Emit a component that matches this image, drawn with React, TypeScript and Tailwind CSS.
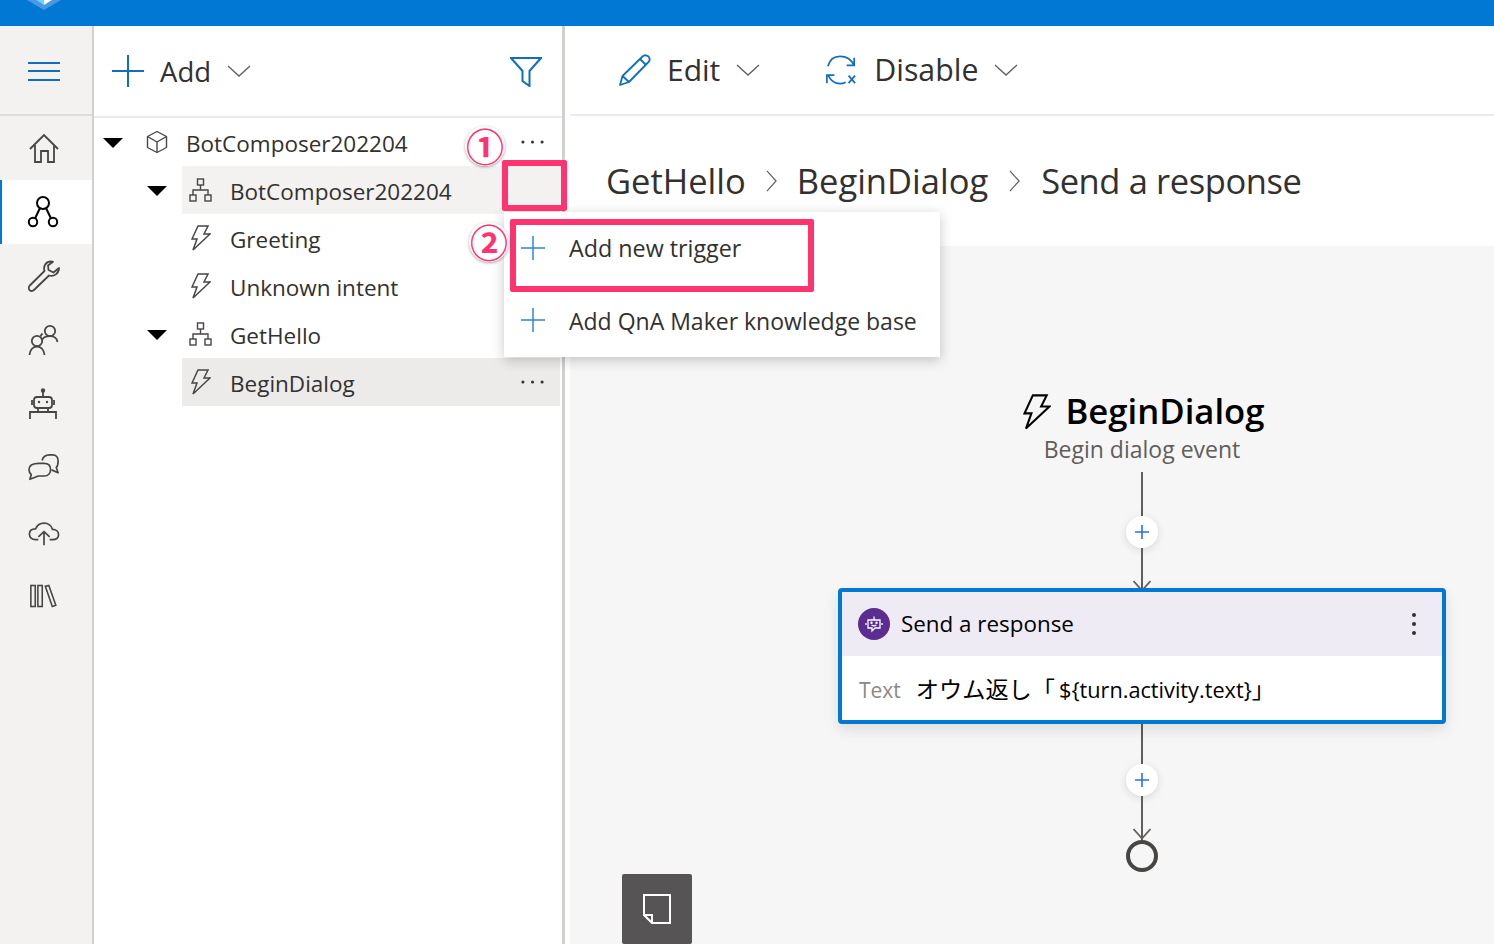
import React from "react";

const F = "font-['Open_Sans','Noto_Sans_CJK_JP',sans-serif]";

type IP = { className?: string };

const Plus = ({ className = "" }: IP) => (
  <svg viewBox="0 0 32 32" className={className} fill="none" stroke="currentColor" strokeWidth="2">
    <path d="M16 0V32M0 16H32" />
  </svg>
);
const Chevron = ({ className = "" }: IP) => (
  <svg viewBox="0 0 24 12" className={className} fill="none" stroke="currentColor" strokeWidth="1.3">
    <path d="M1 1L12 11L23 1" />
  </svg>
);
const Caret = ({ className = "" }: IP) => (
  <svg viewBox="0 0 20 10" className={className} fill="currentColor">
    <path d="M0 0H20L10 10Z" />
  </svg>
);
const Bolt = ({ className = "" }: IP) => (
  <svg viewBox="0 0 20 26" className={className} fill="none" stroke="currentColor" strokeWidth="1.5" strokeLinejoin="miter">
    <path d="M7 1H17L13 9H19L2 25L6 14H1Z" />
  </svg>
);
const Tree = ({ className = "" }: IP) => (
  <svg viewBox="0 0 24 24" className={className} fill="none" stroke="currentColor" strokeWidth="1.4">
    <rect x="8.5" y="1" width="6" height="6" />
    <rect x="1" y="17" width="6" height="6" />
    <rect x="16" y="17" width="6" height="6" />
    <path d="M11.5 7V12M4 17V12H19V17" />
  </svg>
);
const Cube = ({ className = "" }: IP) => (
  <svg viewBox="0 0 22 24" className={className} fill="none" stroke="currentColor" strokeWidth="1.4" strokeLinejoin="round">
    <path d="M11 1.5L20.5 6.5V17.5L11 22.5L1.5 17.5V6.5Z" />
    <path d="M1.5 6.5L11 12L20.5 6.5M11 12V22.5" />
  </svg>
);
const Dots = () => (
  <svg viewBox="0 0 24 4" className="h-1 w-[23px] text-[#323130]" fill="currentColor">
    <circle cx="2" cy="2" r="1.6" />
    <circle cx="12" cy="2" r="1.6" />
    <circle cx="22" cy="2" r="1.6" />
  </svg>
);

const NavHome = () => (
  <svg viewBox="0 0 32 32" className="h-8 w-8" fill="none" stroke="#484644" strokeWidth="1.8">
    <path d="M2 17L16 3L30 17M7 13V30H13V19H20V30H26V13" />
  </svg>
);
const NavFlow = () => (
  <svg viewBox="0 0 32 34" className="h-[34px] w-8" fill="none" stroke="#000" strokeWidth="2">
    <circle cx="16" cy="8" r="6" />
    <circle cx="6" cy="27" r="4.2" />
    <circle cx="26" cy="27" r="4.2" />
    <path d="M13 13L8 23.5M19 13L24 23.5" />
  </svg>
);
const NavWrench = () => (
  <svg viewBox="0 0 32 32" className="h-8 w-8" fill="none" stroke="#484644" strokeWidth="1.8" strokeLinejoin="round">
    <path d="M23 1.5C18 1.5 15 6 16.5 11L1.8 25.5C0 27.5 0.8 29.5 2 30.5C3.5 31.5 5 31 6.5 29.5L21 15.5C26 17 31 13.5 31 8L25.5 12.5L20.5 10L20 5.5L25 1.8C24.5 1.6 23.8 1.5 23 1.5Z" />
  </svg>
);
const NavUsers = () => (
  <svg viewBox="0 0 32 32" className="h-8 w-8" fill="none" stroke="#484644" strokeWidth="1.8">
    <circle cx="22" cy="7" r="5.2" />
    <circle cx="9" cy="17" r="5.2" />
    <path d="M14.5 9.5C13.5 10.5 13 11 12.5 12.5M14 16C15 14 18 12.2 22 12.2C26.5 12.2 29 15 29.5 18M1.5 31C2 26 5 22.5 9 22.5C13 22.5 16 26 16.5 31" />
  </svg>
);
const NavBot = () => (
  <svg viewBox="0 0 28 32" className="h-8 w-7" fill="none" stroke="#484644" strokeWidth="1.8">
    <rect x="5" y="9" width="18" height="11" rx="3" />
    <path d="M14 3V9M3 12V17M25 12V17M9 20V24M19 20V24M1 31V24H27V31" />
    <circle cx="14" cy="2.5" r="1.3" fill="#484644" />
    <circle cx="10" cy="14" r="1.2" fill="#484644" stroke="none" />
    <circle cx="18" cy="14" r="1.2" fill="#484644" stroke="none" />
  </svg>
);
const NavChat = () => (
  <svg viewBox="0 0 34 32" className="h-8 w-8" fill="none" stroke="#484644" strokeWidth="1.8" strokeLinejoin="round">
    <path d="M15 8C16 4 19 2 23 2H26C30 2 32 5 32 8.5C32 12 31.5 14 30 15.5L32 21L25 18" />
    <path d="M12 11H17C22 11 24 14 24 17.5C24 21 22 24.5 17 24.5H11L2 28L3.5 23C2 21.5 1 20 1 17.5C1 14 4 11 12 11Z" />
  </svg>
);
const NavCloud = () => (
  <svg viewBox="0 0 34 26" className="h-[26px] w-8" fill="none" stroke="#484644" strokeWidth="1.8">
    <path d="M11 19H8C4 19 1.5 16.5 1.5 13C1.5 9.5 4 7.5 8 7.5C10 3 13.5 1.5 17 1.5C21.5 1.5 25 4.5 26 8C30 8 32.5 10.5 32.5 13.5C32.5 17 30 19 26 19H23" />
    <path d="M17 25V11M11 16L17 10.5L23 16" />
  </svg>
);
const NavLib = () => (
  <svg viewBox="0 0 32 26" className="h-6 w-7" fill="none" stroke="#484644" strokeWidth="1.8">
    <rect x="1" y="1" width="5" height="24" />
    <rect x="9" y="1" width="5" height="24" />
    <path d="M17.5 2L21.5 1L29.5 23.5L25.5 25Z" />
  </svg>
);

const Row = ({
  indent,
  caret,
  icon,
  label,
  bg,
  dots,
}: {
  indent: string;
  caret?: string;
  icon: React.ReactNode;
  label: string;
  bg?: string;
  dots?: boolean;
}) => (
  <div className="relative flex h-12 items-center">
    {caret && <Caret className={`absolute top-[20px] h-2.5 w-5 text-black ${caret}`} />}
    <div className={`flex h-12 flex-1 items-center ${indent} ${bg ?? ""}`}>
      <div className="flex w-[38px] shrink-0 items-center justify-center">{icon}</div>
      <span className="ml-[10px] pt-[4px] text-[22.5px] leading-none text-[#323130]">{label}</span>
      {dots && (
        <div className="ml-auto mr-[16px]">
          <Dots />
        </div>
      )}
    </div>
  </div>
);

const Stroke = ({ children, className = "" }: { children: React.ReactNode; className?: string }) => (
  <div className={`flex items-center justify-center ${className}`}>{children}</div>
);

const Connector = ({ h }: { h: string }) => <div className={`w-0.5 bg-[#605e5c] ${h}`} />;

const AddDot = () => (
  <div className="flex h-8 w-8 items-center justify-center rounded-full bg-white shadow-[0_2px_8px_rgba(0,0,0,0.12)]">
    <svg viewBox="0 0 16 16" className="h-4 w-4 text-[#2b6fe8]" fill="none" stroke="currentColor" strokeWidth="1.6">
      <path d="M8 1V15M1 8H15" />
    </svg>
  </div>
);

const Arrow = () => (
  <svg viewBox="0 0 20 12" className="h-3 w-5 text-[#605e5c]" fill="none" stroke="currentColor" strokeWidth="1.8">
    <path d="M1.5 1L10 10.5L18.5 1" />
  </svg>
);

export default function App() {
  return (
    <div className={`relative flex h-[944px] w-[1494px] flex-col overflow-hidden bg-white ${F}`}>
      <div className="relative h-[26px] shrink-0 overflow-hidden bg-[#0078d4]">
        <svg viewBox="0 0 34 10" className="absolute left-[27px] top-0 h-[10px] w-[34px]">
          <path d="M0 0H34L17 10Z" fill="#4a97e6" />
          <path d="M9 0H17V5Z" fill="#5fd7ff" />
          <path d="M17 0H25L17 5Z" fill="#fff" />
        </svg>
      </div>

      <div className="flex min-h-0 flex-1">
        {/* Left rail */}
        <nav className="flex w-[94px] shrink-0 flex-col border-r-2 border-[#d2d0ce] bg-[#f3f2f1]">
          <div className="flex h-[90px] shrink-0 items-center justify-center border-b-2 border-[#dedcda] pr-[4px] pt-[2px]">
            <div className="flex w-8 flex-col gap-[6.5px]">
              <div className="h-0.5 bg-[#106ebe]" />
              <div className="h-0.5 bg-[#106ebe]" />
              <div className="h-0.5 bg-[#106ebe]" />
            </div>
          </div>
          <Stroke className="h-16 pr-[4px]">
            <NavHome />
          </Stroke>
          <Stroke className="h-16 border-l-2 border-[#0078d4] bg-white pr-[8px]">
            <NavFlow />
          </Stroke>
          <Stroke className="h-16 pr-[4px]">
            <NavWrench />
          </Stroke>
          <Stroke className="h-16 pr-[4px]">
            <NavUsers />
          </Stroke>
          <Stroke className="h-16 pr-[6px]">
            <NavBot />
          </Stroke>
          <Stroke className="h-16 pr-[4px]">
            <NavChat />
          </Stroke>
          <Stroke className="h-16 pr-[4px] pt-[4px]">
            <NavCloud />
          </Stroke>
          <Stroke className="h-16 pr-[4px]">
            <NavLib />
          </Stroke>
        </nav>

        {/* Tree panel */}
        <aside className="flex w-[468px] shrink-0 flex-col">
          <div className="flex h-[92px] shrink-0 items-center border-b-2 border-[#edebe9] pl-[18px] pr-[20px]">
            <Plus className="h-8 w-8 text-[#106ebe]" />
            <span className="ml-4 pt-[2px] text-[27.5px] leading-none text-[#323130]">Add</span>
            <Chevron className="ml-4 h-3 w-6 text-[#605e5c]" />
            <svg viewBox="0 0 32 30" className="ml-auto mt-[2px] h-[30px] w-8 text-[#106ebe]" fill="none" stroke="currentColor" strokeWidth="2">
              <path d="M1 1H31L19.5 14V29L12.5 24V14Z" />
            </svg>
          </div>
          <div className="pr-0.5">
            <Row indent="ml-[44px]" caret="left-[9px]" icon={<Cube className="h-6 w-[22px] text-[#484644]" />} label="BotComposer202204" dots />
            <Row indent="ml-[88px]" caret="left-[53px]" icon={<Tree className="h-6 w-6 text-[#484644]" />} label="BotComposer202204" bg="bg-[#f3f2f1]" />
            <Row indent="ml-[88px]" icon={<Bolt className="h-[26px] w-5 text-[#484644]" />} label="Greeting" />
            <Row indent="ml-[88px]" icon={<Bolt className="h-[26px] w-5 text-[#484644]" />} label="Unknown intent" />
            <Row indent="ml-[88px]" caret="left-[53px]" icon={<Tree className="h-6 w-6 text-[#484644]" />} label="GetHello" />
            <Row indent="ml-[88px]" icon={<Bolt className="h-[26px] w-5 text-[#484644]" />} label="BeginDialog" bg="bg-[#edebe9]" dots />
          </div>
        </aside>

        {/* Main */}
        <main className="flex min-w-0 flex-1 flex-col border-l-[3px] border-[#d2d0ce]">
          <div className="flex min-h-0 flex-1 flex-col pl-[5px]">
            <div className="flex h-[90px] shrink-0 items-center border-b-2 border-[#edebe9] pl-[49px]">
              <svg viewBox="0 0 32 32" className="h-8 w-8 text-[#106ebe]" fill="none" stroke="currentColor" strokeWidth="1.8" strokeLinejoin="round">
                <path d="M1 31L3.5 22L23.5 2.5C25 1 27.5 1 29.5 2.5C31 4.5 31 6.5 29.5 8L10 28Z" />
                <path d="M3.5 22L10 28M21 5L27 11" />
              </svg>
              <span className="ml-4 text-[30px] leading-none text-[#323130]">Edit</span>
              <Chevron className="ml-4 h-3 w-6 text-[#605e5c]" />
              <svg viewBox="0 0 34 34" className="ml-[65px] h-[34px] w-8 text-[#106ebe]" fill="none" stroke="currentColor" strokeWidth="1.8">
                <path d="M3 13C5 6 10 2.5 16 2.5C23 2.5 28 6 31 12M31 4V12H23" />
                <path d="M22 30C20 31 18 31.5 16 31.5C10 31.5 6 28 3.5 23M2 31V22.5H10" />
                <path d="M25 23L32 31M32 23L25 31" />
              </svg>
              <span className="ml-[17px] text-[30.3px] leading-none text-[#323130]">Disable</span>
              <Chevron className="ml-4 h-3 w-6 text-[#605e5c]" />
            </div>
            <div className="flex h-[130px] shrink-0 items-center pl-[36px] text-[34.5px] leading-none text-[#323130]">
              <span>GetHello</span>
              <svg viewBox="0 0 12 24" className="mx-[20px] h-6 w-[11px] text-[#605e5c]" fill="none" stroke="currentColor" strokeWidth="1.3">
                <path d="M1 1L11 12L1 23" />
              </svg>
              <span>BeginDialog</span>
              <svg viewBox="0 0 12 24" className="mx-[21px] h-6 w-[11px] text-[#605e5c]" fill="none" stroke="currentColor" strokeWidth="1.3">
                <path d="M1 1L11 12L1 23" />
              </svg>
              <span className="tracking-[-0.4px]">Send a response</span>
            </div>

            {/* Canvas */}
            <div className="relative min-h-0 flex-1 bg-[#f6f6f6] pl-[268px] pt-[143px]">
              <div className="flex w-[608px] flex-col items-center">
                <div className="ml-[4px] flex h-[46px] items-center gap-[14px]">
                  <Bolt className="h-9 w-7 text-black" />
                  <span className="pb-[2px] text-[34.7px] font-semibold leading-none text-black">BeginDialog</span>
                </div>
                <div className="-mt-px text-[23px] leading-[30px] text-[#605e5c]">Begin dialog event</div>
                <div className="mt-[8px] flex flex-col items-center">
                  <Connector h="h-[44px]" />
                  <AddDot />
                  <Connector h="h-[40px]" />
                  <div className="-mb-[4px] -mt-[8px]">
                    <Arrow />
                  </div>
                </div>
                <div className="relative z-10 h-[136px] w-[608px] overflow-hidden rounded-[4px] border-[4px] border-[#0078d4] bg-white shadow-[0_6px_14px_rgba(0,0,0,0.10)]">
                  <div className="flex h-[64px] items-center bg-[#efebf5] pl-[16px] pr-[26px]">
                    <div className="flex h-8 w-8 items-center justify-center rounded-full bg-[#5c2d91]">
                      <svg viewBox="0 0 20 20" className="h-5 w-5" fill="none" stroke="#fff" strokeWidth="1.3">
                        <path d="M4 6H16V14H11L8 17V14H4ZM10 6V2.5M2 9V11M18 9V11" />
                        <path d="M7.5 11C9 12 11 12 12.5 11" />
                        <circle cx="7.5" cy="8.8" r=".6" fill="#fff" />
                        <circle cx="12.5" cy="8.8" r=".6" fill="#fff" />
                      </svg>
                    </div>
                    <span className="ml-[11px] text-[22.4px] leading-none text-black">Send a response</span>
                    <svg viewBox="0 0 4 24" className="ml-auto h-6 w-1 text-[#323130]" fill="currentColor">
                      <circle cx="2" cy="3" r="2" />
                      <circle cx="2" cy="12" r="2" />
                      <circle cx="2" cy="21" r="2" />
                    </svg>
                  </div>
                  <div className="flex h-[64px] items-center pl-[17px] pt-[4px]">
                    <span className="text-[21px] leading-none text-[#8a8886]">Text</span>
                    <span className="ml-[15px] whitespace-nowrap text-[21.7px] leading-none text-black">
                      <span className="mr-[4px] text-[23.2px]">オウム返し「</span>${"{"}turn.activity.text{"}"}<span className="text-[23.2px]">」</span>
                    </span>
                  </div>
                </div>
                <div className="flex flex-col items-center">
                  <Connector h="h-[40px]" />
                  <AddDot />
                  <Connector h="h-[44px]" />
                  <div className="-mt-[12px]">
                    <Arrow />
                  </div>
                  <div className="h-8 w-8 rounded-full border-[4px] border-[#484644]" />
                </div>
              </div>
              <div className="absolute bottom-0 left-[52px] flex h-[70px] w-[70px] items-center justify-center rounded-[2px] bg-[#565454]">
                <svg viewBox="0 0 28 30" className="h-[30px] w-7" fill="none" stroke="#fff" strokeWidth="2">
                  <path d="M1 1H27V29H9L1 21Z" />
                  <path d="M1 21H9V29" />
                </svg>
              </div>
            </div>
          </div>
        </main>
      </div>

      {/* Overlay: context menu */}
      <div className="absolute left-[504px] top-[212px] z-20 flex h-[145px] w-[436px] flex-col bg-white pl-[17px] shadow-[0_3px_12px_rgba(0,0,0,0.22)]">
        <div className="flex h-[76px] items-center">
          <Plus className="mb-[4px] h-6 w-6 text-[#2b88d8]" />
          <span className="ml-[24px] pb-[2px] text-[23.3px] leading-none text-[#323130]">Add new trigger</span>
        </div>
        <div className="flex h-[68px] items-center">
          <Plus className="mb-[4px] h-6 w-6 text-[#2b88d8]" />
          <span className="ml-[24px] pb-[2px] text-[23px] leading-none text-[#323130]">Add QnA Maker knowledge base</span>
        </div>
      </div>

      {/* Overlay: annotations */}
      <div className="absolute left-[502px] top-[160px] z-30 h-[51px] w-[65px] rounded-[2px] border-[6px] border-[#ff3370] bg-[#f3f2f1]" />
      <div className="absolute left-[510px] top-[219px] z-30 h-[73px] w-[304px] rounded-[2px] border-[6px] border-[#ff3370]" />
      <div className="absolute left-[465px] top-[126px] z-30 flex h-10 w-10 items-center justify-center rounded-full bg-white text-[38px] font-bold leading-none text-[#ff3370] shadow-[0_1px_3px_rgba(0,0,0,0.35)]">①</div>
      <div className="absolute left-[469px] top-[222px] z-30 flex h-10 w-10 items-center justify-center rounded-full bg-white text-[38px] font-bold leading-none text-[#ff3370] shadow-[0_1px_3px_rgba(0,0,0,0.35)]">②</div>
    </div>
  );
}
